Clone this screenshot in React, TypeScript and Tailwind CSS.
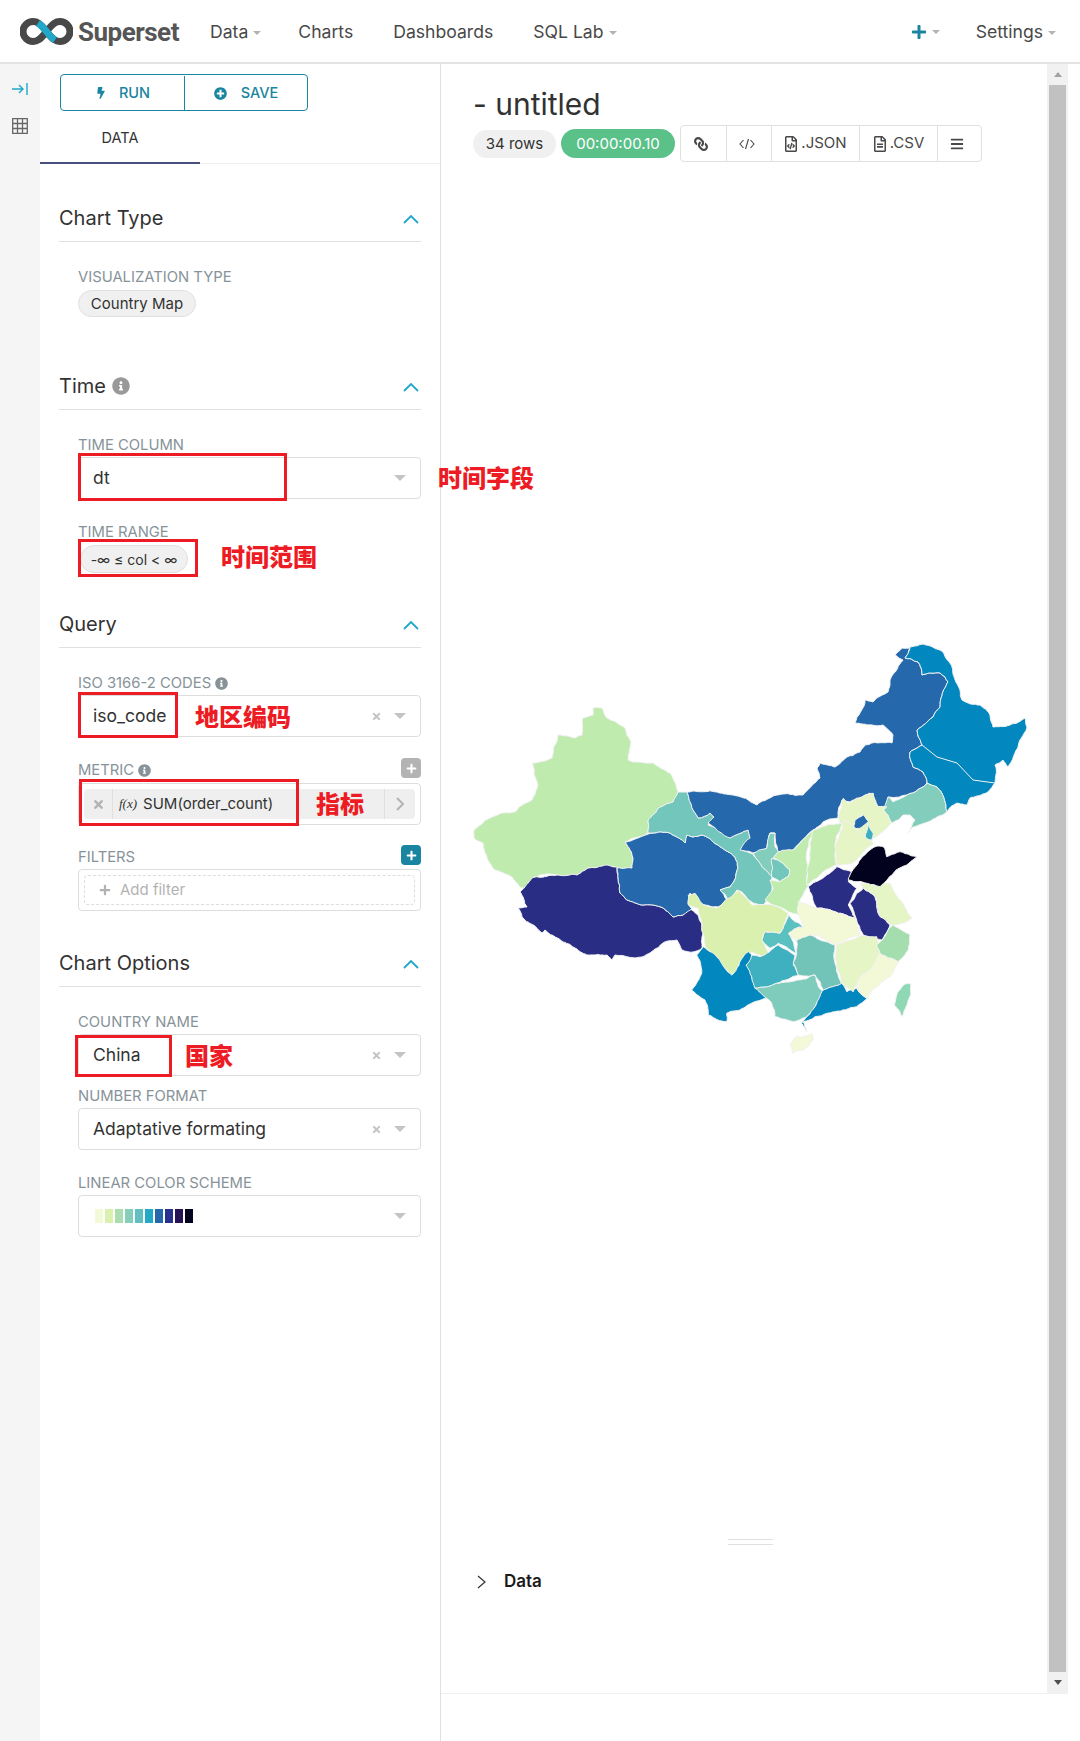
import {
  FaBars,
  FaBolt,
  FaInfoCircle,
  FaLink,
  FaPlus,
  FaPlusCircle,
  FaRegFileAlt,
  FaRegFileCode,
  FaTimes,
} from "react-icons/fa";

const page = [
  ["#BFEBAF", "593,708 602,708 607,718 625,728 631,742 628,760 653,763 670,773 678,792 673,802 660,807 648,820 648,833 625,842 633,858 632,868 617,868 607,866 588,868 577,875 557,875 535,877 528,888 520,887 512,877 495,870 487,857 483,843 474,838 474,830 490,818 502,813 515,812 532,800 538,785 532,763 552,758 558,735 575,738 582,735 583,718 593,715"],
  ["#2A2D84", "520,892 532,878 557,875 577,875 588,868 617,867 618,878 620,893 627,900 643,905 663,908 673,917 683,915 690,909 698,915 703,933 702,948 693,952 682,950 677,940 663,943 642,957 615,955 612,960 607,955 587,955 575,948 563,942 545,930 542,933 522,917 518,908 527,907"],
  ["#2568AC", "625,842 653,833 670,833 685,843 687,835 693,837 702,835 718,845 735,857 738,868 730,887 720,890 727,900 718,907 700,903 690,893 688,903 692,909 683,915 673,917 663,908 643,905 627,900 620,893 618,878 617,868 632,868 633,858"],
  ["#72C6BB", "678,792 687,792 693,810 698,818 710,813 714,817 708,825 730,838 748,830 750,838 741,850 753,854 760,863 772,877 772,888 770,897 763,905 753,903 742,892 737,890 728,900 720,890 730,887 738,868 735,857 718,845 702,835 693,837 687,835 685,843 670,833 653,833 648,833 648,820 660,807 673,802"],
  ["#2568AC", "687,792 717,792 753,803 757,805 777,795 803,795 820,778 817,768 820,763 835,767 847,757 860,752 865,745 892,743 893,735 883,725 872,725 855,723 865,700 873,702 888,692 890,680 903,660 895,655 902,648 910,648 905,658 918,662 922,675 940,673 948,682 940,707 933,717 917,730 922,745 910,752 913,767 923,772 927,783 907,795 888,797 887,807 877,807 870,793 850,802 842,800 838,818 823,822 813,830 793,850 778,852 775,833 770,833 767,848 753,853 740,850 750,838 748,830 730,838 708,823 714,817 710,813 698,818 693,810"],
  ["#0288BE", "910,647 923,644 943,652 952,667 960,690 962,700 980,705 990,715 993,727 1010,725 1025,718 1027,727 1018,747 1008,767 1003,760 995,765 995,783 988,792 970,798 967,805 957,803 947,812 937,787 927,783 923,772 913,767 910,752 922,745 917,730 933,717 940,707 948,682 940,673 922,675 918,662 905,658"],
  ["#82CDBC", "927,783 937,787 947,812 937,817 913,827 908,833 915,820 910,815 903,815 892,823 883,810 888,797 893,802 907,795"],
];

// traced from the zoomed crops, hence the offsets and the factor 3
const north = [
  ["#E6F5C5", "295,595 310,535 325,550 375,525 400,520 415,560 440,560 430,570 455,610 400,655 350,715 300,720 290,670 310,630"],
  ["#2568AC", "345,600 370,585 385,605 360,625 340,625"],
  ["#3EB0C0", "385,610 400,640 395,660 375,655"],
];

const south = [
  ["#82CDBC", "280,100 320,85 330,40 345,40 345,80 355,95 340,115 335,170 300,130"],
  ["#72C6BB", "335,115 355,120 390,150 385,170 360,185 335,170"],
  ["#BFEBAF", "355,95 400,90 460,30 440,180 445,195 420,240 415,285 385,275 340,255 315,240 340,205 330,180 360,185 385,170 390,150 355,120 340,115"],
  ["#C5ECB1", "460,30 545,10 525,100 530,135 440,195 440,150 450,70"],
  ["#E6F5C5", "550,0 640,70 575,130 530,135 525,80"],
  ["#2A2D84", "445,200 530,140 575,155 565,185 590,205 575,235 565,255 585,295 535,280 470,265"],
  ["#E6F5C5", "600,190 650,195 690,190 720,240 755,295 730,310 690,315 660,290 650,235 610,205"],
  ["#2A2D84", "590,220 610,205 645,230 660,290 690,315 665,360 610,345 590,300 570,250"],
  ["#02021E", "645,80 670,80 680,110 720,95 770,110 740,135 700,160 660,200 620,190 565,180 575,155 600,120"],
  ["#F3F9D6", "415,245 470,265 535,280 585,295 600,345 530,375 470,345 415,370 385,340 430,320 415,285"],
  ["#5BC0C0", "385,285 430,320 385,340 410,400 355,370 330,385 305,360 315,335 360,340"],
  ["#D9F0AE", "85,225 105,220 125,250 170,265 235,210 275,255 310,255 340,255 385,280 360,340 315,335 305,360 330,415 300,405 275,395 240,425 215,465 135,380 115,265 85,255"],
  ["#0288BE", "110,405 130,380 150,395 215,465 240,425 265,395 275,405 300,410 260,435 285,500 325,535 240,570 200,580 200,605 145,585 135,540 95,510 125,460"],
  ["#3EB0C0", "258,435 275,405 300,410 355,375 405,405 400,435 415,465 350,490 285,505 275,470"],
  ["#73C4B8", "410,360 450,345 525,375 530,455 545,490 490,510 465,465 415,465 400,430 410,400"],
  ["#7FCCBC", "285,505 350,490 465,465 475,500 490,515 465,560 440,590 400,605 345,590 335,550 320,535"],
  ["#0288BE", "490,510 545,490 560,515 590,505 620,535 590,560 525,575 465,590 430,605 440,635 425,610 465,560"],
  ["#E6F5C5", "530,375 600,348 650,350 660,400 600,475 580,515 545,490 530,430"],
  ["#F3F9D6", "600,470 660,400 715,425 690,470 620,535 590,505"],
  ["#A4DEAF", "650,375 700,315 750,345 745,390 715,425 660,400"],
  ["#F3F9D6", "390,672 408,650 458,642 460,660 432,690 398,700"],
  ["#8FD8B5", "735,492 753,492 752,525 742,552 725,590 703,555 712,518"],
];

type Pt = [number, number];

// same midpoint gives the same offset, so two provinces sharing an edge stay joined
function wobble(x: number, y: number) {
  const h = Math.sin(Math.round(x * 2) * 12.9898 + Math.round(y * 2) * 78.233) * 43758.5453;
  return h - Math.floor(h) - 0.5;
}

function roughen(a: Pt, b: Pt, out: Pt[]) {
  const len = Math.hypot(b[0] - a[0], b[1] - a[1]);
  if (len < 3.5) {
    out.push(b);
    return;
  }
  const mx = (a[0] + b[0]) / 2;
  const my = (a[1] + b[1]) / 2;
  const m: Pt = [mx + wobble(mx, my) * len * 0.16, my + wobble(my, mx) * len * 0.16];
  roughen(a, m, out);
  roughen(m, b, out);
}

function shape(points: string, dx = 0, dy = 0, k = 1) {
  const pts = points.split(" ").map((p) => {
    const [x, y] = p.split(",").map(Number);
    return [dx + x * k, dy + y * k] as Pt;
  });
  const out: Pt[] = [];
  pts.forEach((p, i) => roughen(p, pts[(i + 1) % pts.length], out));
  return out.map((p) => `${p[0].toFixed(1)},${p[1].toFixed(1)}`).join(" ");
}

function ChinaMap() {
  return (
    <svg width="590" height="430" viewBox="460 630 590 430" className="ml-[-13px] mt-[468px] block">
      <g stroke="#f2f2f2" strokeWidth="1" strokeLinejoin="round">
        {page.map(([fill, points], i) => (
          <polygon key={i} fill={fill} points={shape(points)} />
        ))}
        <polyline fill="none" points="922,745 937,757 957,763 973,780 995,783" />
        {north.map(([fill, points], i) => (
          <polygon key={i} fill={fill} points={shape(points, 740, 620, 1 / 3)} />
        ))}
        {south.map(([fill, points], i) => (
          <polygon key={i} fill={fill} points={shape(points, 660, 820, 1 / 3)} />
        ))}
      </g>
    </svg>
  );
}

function Caret() {
  return <span className="ml-[5px] inline-block h-0 w-0 border-x-[4px] border-t-[4px] border-x-transparent border-t-[#b3b3b3] align-middle" />;
}

function SelectArrow() {
  return <span className="block h-0 w-0 border-x-[6px] border-t-[6px] border-x-transparent border-t-[#c4c4c4]" />;
}

function Chevron() {
  return (
    <svg width="16" height="10" viewBox="0 0 16 10" fill="none" stroke="#20a7c9" strokeWidth="1.8" className="ml-auto mr-[2px] mt-[2px]">
      <path d="M1 9 L8 2 L15 9" />
    </svg>
  );
}

function Section({ title, info, className, children }: { title: string; info?: boolean; className: string; children: React.ReactNode }) {
  return (
    <div className={className}>
      <div className="flex h-[47px] items-center border-b border-[#e0e0e0] text-[20px] text-[#323232]">
        {title}
        {info && <FaInfoCircle className="ml-[6px] text-[18px] text-[#999]" />}
        <Chevron />
      </div>
      <div className="pl-[19px] pt-[25px]">{children}</div>
    </div>
  );
}

function Label({ text, info, className }: { text: string; info?: boolean; className?: string }) {
  return (
    <div className={`flex h-[18px] items-center pt-[2px] text-[14.8px] leading-[18px] text-[#879399] ${className ?? ""}`}>
      {text}
      {info && <FaInfoCircle className="ml-[4px] text-[13px] text-[#879399]" />}
    </div>
  );
}

function Select({ value, clear, children }: { value?: string; clear?: boolean; children?: React.ReactNode }) {
  return (
    <div className="mt-[4px] flex h-[42px] items-center rounded border border-[#ddd] pl-[14px] pr-[14px] text-[17.5px] text-[#323232]">
      {value}
      {children}
      {clear && <FaTimes className="ml-auto mr-[12px] text-[11px] text-[#c4c4c4]" />}
      <span className={clear ? "" : "ml-auto"}>
        <SelectArrow />
      </span>
    </div>
  );
}

function RedBox({ className }: { className: string }) {
  return <div className={`absolute border-[3px] border-[#ed1c24] ${className}`} />;
}

function RedNote({ text, className }: { text: string; className: string }) {
  return <div className={`absolute whitespace-nowrap text-[24px] font-black leading-none text-[#ed1c24] [font-family:'Noto_Sans_CJK_SC',sans-serif] ${className}`}>{text}</div>;
}

function SmallPlus({ className }: { className: string }) {
  return (
    <div className={`absolute right-0 top-[-2px] flex h-[20px] w-[20px] items-center justify-center rounded-sm text-[11px] text-white ${className}`}>
      <FaPlus />
    </div>
  );
}

const swatches = ["#f1f9d5", "#d9f0ae", "#a8deb0", "#85cfba", "#5fc0bf", "#22a9c8", "#2568ad", "#28318f", "#261255", "#02021e"];

export default function App() {
  return (
    <div className="h-[1741px] w-[1080px] overflow-hidden bg-white text-[#323232] [font-family:Inter,sans-serif]">
      <nav className="flex h-[64px] items-center border-b-2 border-[#e3e3e3] pl-[20px] pt-[2px] text-[17.6px] text-[#484848]">
        <svg width="53" height="27" viewBox="0 0 53 27" fill="none" strokeWidth="7" className="mt-[-2px]">
          <path d="M26.5 13.5 C20 5 17 3.5 13 3.5 A10 10 0 0 0 13 23.5 C17 23.5 20 22 26.5 13.5 C33 5 36 3.5 40 3.5 A10 10 0 0 1 40 23.5 C36 23.5 33 22 26.5 13.5Z" stroke="#484848" />
          <path d="M18 5 C21 7 24 10 26.5 13.5 C29 17 32 20 35 22" stroke="#20a7c9" />
        </svg>
        <span className="ml-[5px] w-[132px] text-[26px] font-bold tracking-[-0.5px] text-[#555] [font-family:Roboto,sans-serif]">Superset</span>
        <span>Data<Caret /></span>
        <span className="ml-[37px]">Charts</span>
        <span className="ml-[40px]">Dashboards</span>
        <span className="ml-[40px]">SQL Lab<Caret /></span>
        <FaPlus className="ml-auto text-[16px] text-[#1a85a0]" />
        <Caret />
        <span className="ml-[36px] mr-[24px]">Settings<Caret /></span>
      </nav>

      <div className="flex h-[1677px]">
        <aside className="flex w-[40px] flex-col items-center bg-[#f5f5f5] pt-[18px]">
          <svg width="16" height="14" viewBox="0 0 16 14" fill="none" stroke="#20a7c9" strokeWidth="1.4">
            <path d="M0 7 H11 M7 3 L11 7 L7 11 M15 1 V13" />
          </svg>
          <svg width="16" height="16" viewBox="0 0 16 16" fill="none" stroke="#666" strokeWidth="1.3" className="mt-[22px]">
            <path d="M.7.7 H15.3 V15.3 H.7Z M.7 5.5 H15.3 M.7 10.5 H15.3 M5.5 .7 V15.3 M10.5 .7 V15.3" />
          </svg>
        </aside>

        <div className="w-[401px] border-r border-[#e0e0e0]">
          <div className="pl-[20px] pt-[10px]">
            <div className="flex h-[37px] w-[248px] rounded border border-[#1a85a0] pt-[1px] text-[14.5px] font-medium text-[#1a85a0]">
              <div className="flex w-[124px] items-center justify-center gap-[12px] border-r border-[#1a85a0]">
                <FaBolt className="text-[12px]" />
                RUN
              </div>
              <div className="flex flex-1 items-center justify-center gap-[14px]">
                <FaPlusCircle className="text-[13px]" />
                SAVE
              </div>
            </div>
          </div>
          <div className="h-[53px] border-b border-[#eee]">
            <div className="flex h-[53px] w-[160px] items-center justify-center border-b-2 border-[#484e7f] pt-[2px] text-[14.5px] text-[#323232]">DATA</div>
          </div>

          <div className="pl-[19px] pr-[19px]">
            <Section title="Chart Type" className="mt-[31px]">
              <Label text="VISUALIZATION TYPE" />
              <div className="mt-[5px] flex h-[27px] w-[118px] items-center justify-center rounded-full border border-[#e0e0e0] bg-[#f0f0f0] pt-[1px] text-[15px]">Country Map</div>
            </Section>
            <Section title="Time" info className="mt-[46px]">
              <Label text="TIME COLUMN" />
              <div className="relative">
                <Select value="dt" />
                <RedBox className="left-0 top-[-4px] h-[48px] w-[209px]" />
                <RedNote text="时间字段" className="left-[360px] top-[8px]" />
              </div>
              <Label text="TIME RANGE" className="mt-[23px]" />
              <div className="relative mt-[5px] h-[28px]">
                <div className="ml-[2px] flex h-[28px] w-[108px] items-center justify-center rounded-full border border-[#e0e0e0] bg-[#f0f0f0] text-[14px]">-∞ ≤ col &lt; ∞</div>
                <RedBox className="left-0 top-[-6px] h-[38px] w-[120px]" />
                <RedNote text="时间范围" className="left-[143px] top-[-1px]" />
              </div>
            </Section>
            <Section title="Query" className="mt-[28px]">
              <Label text="ISO 3166-2 CODES" info />
              <div className="relative">
                <Select value="iso_code" clear />
                <RedBox className="left-0 top-[-3px] h-[46px] w-[100px]" />
                <RedNote text="地区编码" className="left-[117px] top-[9px]" />
              </div>
              <div className="relative mt-[23px]">
                <Label text="METRIC" info />
                <SmallPlus className="bg-[#b3b3b3]" />
              </div>
              <div className="relative mt-[5px] flex h-[42px] items-center rounded border border-[#ddd] px-[5px]">
                <div className="flex h-[30px] flex-1 items-center rounded-sm bg-[#efefef] text-[15px]">
                  <div className="flex h-full w-[29px] items-center justify-center border-r border-[#e0e0e0] text-[13px] text-[#b3b3b3]"><FaTimes /></div>
                  <span className="ml-[6px] mr-[6px] text-[13px] italic [font-family:'Liberation_Serif',serif]">f(x)</span>
                  SUM(order_count)
                  <div className="ml-auto flex h-full w-[31px] items-center justify-center border-l border-[#e0e0e0]">
                    <svg width="9" height="14" viewBox="0 0 9 14" fill="none" stroke="#b3b3b3" strokeWidth="2"><path d="M1 1 L7 7 L1 13" /></svg>
                  </div>
                </div>
                <RedBox className="left-0 top-[-5px] h-[47px] w-[220px]" />
                <RedNote text="指标" className="left-[237px] top-[7px]" />
              </div>
              <div className="relative mt-[22px]">
                <Label text="FILTERS" />
                <SmallPlus className="bg-[#1a85a0]" />
              </div>
              <div className="mt-[4px] flex h-[42px] items-center rounded border border-[#ddd] px-[5px]">
                <div className="flex h-[30px] flex-1 items-center rounded border border-dashed border-[#ddd] pl-[14px] text-[15px] text-[#b3b3b3]">
                  <FaPlus className="mr-[9px] text-[12px]" />
                  Add filter
                </div>
              </div>
            </Section>
            <Section title="Chart Options" className="mt-[29px]">
              <Label text="COUNTRY NAME" />
              <div className="relative">
                <Select value="China" clear />
                <RedBox className="left-[-3px] top-[1px] h-[42px] w-[97px]" />
                <RedNote text="国家" className="left-[107px] top-[9px]" />
              </div>
              <Label text="NUMBER FORMAT" className="mt-[10px]" />
              <Select value="Adaptative formating" clear />
              <Label text="LINEAR COLOR SCHEME" className="mt-[23px]" />
              <Select>
                <div className="flex gap-[2px] pl-[2px]">
                  {swatches.map((color) => (
                    <div key={color} className="h-[14px] w-[8px]" style={{ backgroundColor: color }} />
                  ))}
                </div>
              </Select>
            </Section>
          </div>
        </div>

        <div className="flex h-[1630px] w-[627px] border-b border-[#f0f0f0]">
          <div className="min-w-0 flex-1 pl-[32px] pt-[20px]">
            <div className="h-[41px] text-[30px] leading-[41px] text-[#323232]">- untitled</div>
            <div className="flex h-[37px] items-center text-[15px]">
              <div className="flex h-[28px] w-[83px] items-center justify-center rounded-full bg-[#f0f0f0] pt-[1px]">34 rows</div>
              <div className="ml-[5px] flex h-[29px] w-[114px] items-center justify-center rounded-full bg-[#5ac189] pt-[1px] text-white">00:00:00.10</div>
              <div className="ml-[5px] flex h-[37px] w-[302px] rounded border border-[#e0e0e0] text-[15px] text-[#484848]">
                <div className="flex w-[46px] items-center justify-center border-r border-[#e0e0e0] pr-[5px] text-[14px]"><FaLink className="-scale-x-100" /></div>
                <div className="flex w-[45px] items-center justify-center border-r border-[#e0e0e0] pr-[5px]">
                  <svg width="16" height="12" viewBox="0 0 16 12" fill="none" stroke="#484848" strokeWidth="1.1"><path d="M4.5 2 L1 6 L4.5 10 M11.5 2 L15 6 L11.5 10 M9.5 1 L6.5 11" /></svg>
                </div>
                <div className="flex w-[88px] items-center justify-center gap-[2px] border-r border-[#e0e0e0] pr-[1px]"><FaRegFileCode className="text-[16px]" />.JSON</div>
                <div className="flex w-[78px] items-center justify-center gap-[2px] border-r border-[#e0e0e0] pr-[1px]"><FaRegFileAlt className="text-[16px]" />.CSV</div>
                <div className="flex flex-1 items-center justify-center pr-[5px] text-[14px]"><FaBars /></div>
              </div>
            </div>
            <ChinaMap />
            <div className="ml-[255px] mt-[479px] h-[6px] w-[45px] border-y border-[#e0e0e0]" />
            <div className="ml-[4px] mt-[24px] flex items-center text-[17px] font-semibold text-[#1a1a1a]">
              <svg width="10" height="14" viewBox="0 0 10 14" fill="none" stroke="#323232" strokeWidth="1.2"><path d="M1 1 L8 7 L1 13" /></svg>
              <span className="ml-[17px]">Data</span>
            </div>
          </div>
          <div className="flex w-[21px] flex-col items-center bg-[#f1f1f1]">
            <div className="flex h-[21px] items-center">
              <span className="h-0 w-0 border-x-[4px] border-b-[5px] border-x-transparent border-b-[#a3a3a3]" />
            </div>
            <div className="w-[17px] flex-1 bg-[#c1c1c1]" />
            <div className="flex h-[21px] items-center">
              <span className="h-0 w-0 border-x-[4px] border-t-[5px] border-x-transparent border-t-[#505050]" />
            </div>
          </div>
        </div>
      </div>
    </div>
  );
}
